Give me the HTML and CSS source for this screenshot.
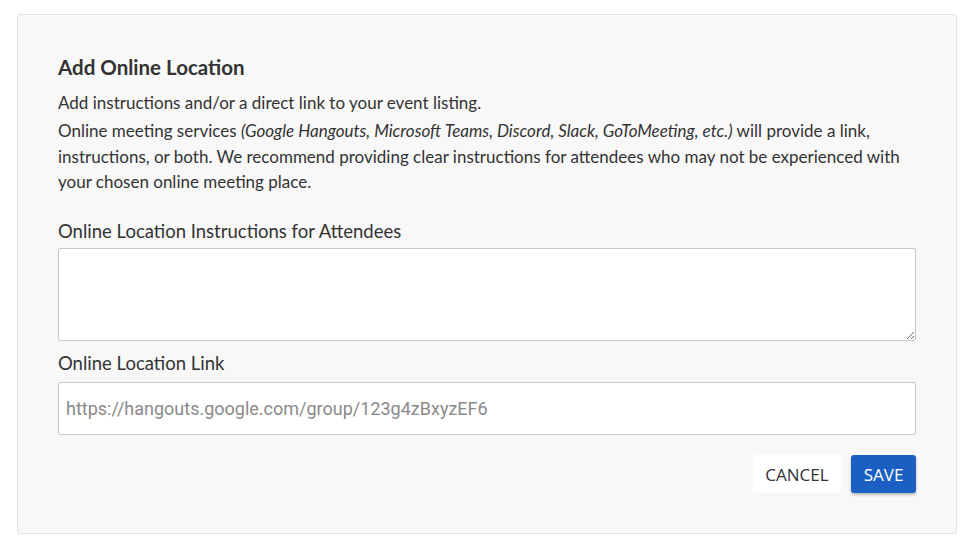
FILE: index.html
```html
<!DOCTYPE html>
<html>
<head>
<meta charset="utf-8">
<link rel="stylesheet" href="styles.css">
</head>
<body>
<div class="page">
  <section class="card">
    <h2 class="title">Add Online Location</h2>
    <p class="text">Add instructions and/or a direct link to your event listing.</p>
    <p class="text">Online meeting services <em>(Google Hangouts, Microsoft Teams, Discord, Slack, GoToMeeting, etc.)</em> will provide a link, instructions, or both. We recommend providing clear instructions for attendees who may not be experienced with your chosen online meeting place.</p>
    <label class="label label-first">Online Location Instructions for Attendees</label>
    <textarea class="area"></textarea>
    <label class="label label-second">Online Location Link</label>
    <input class="field" type="text" placeholder="https://hangouts.google.com/group/123g4zBxyzEF6">
    <div class="actions">
      <button class="btn btn-cancel">CANCEL</button>
      <button class="btn btn-save">SAVE</button>
    </div>
  </section>
</div>
</body>
</html>
```

FILE: styles.css
```css
* { box-sizing: border-box; }
html, body { margin: 0; padding: 0; background: #ffffff; }
body {
  font-family: "Lato", "Noto Sans", sans-serif;
  color: #333333;
}
.page {
  padding: 14px 22px 16px 17px;
}
.card {
  background: #f8f8f8;
  border: 1px solid #e1e1e1;
  border-radius: 3px;
  padding: 38px 40px 40px 39px;
  display: flex;
  flex-direction: column;
}
.title {
  margin: 0 0 9px 1px;
  font-size: 20.5px;
  font-weight: 700;
  line-height: 28px;
  color: #333;
}
.text {
  margin: 0 0 2.5px 1px;
  font-size: 17px;
  line-height: 25.5px;
  color: #333;
}
.text em { font-style: italic; }
.label {
  display: block;
  font-size: 18.5px;
  line-height: 24px;
  color: #333;
  margin: 0 0 5px 1px;
}
.label-first { margin-top: 22px; }
.label-second { margin-bottom: 7px; }
.area {
  display: block;
  width: calc(100% - 1px);
  margin: 0 0 10px 1px;
  height: 93px;
  border: 1px solid #c8c8c8;
  border-radius: 2px;
  background: #fff;
  resize: vertical;
  font-family: inherit;
}
.field {
  display: block;
  width: calc(100% - 1px);
  margin-left: 1px;
  height: 53px;
  border: 1px solid #c8c8c8;
  border-radius: 2px;
  background: #fff;
  padding: 0 7px;
  font-family: "Roboto", sans-serif;
  font-size: 18px;
  color: #333;
}
.field::placeholder { color: #8a8a8a; }
.actions {
  display: flex;
  justify-content: flex-end;
  gap: 10px;
  margin-top: 20px;
}
.btn {
  height: 38px;
  border: 0;
  border-radius: 3px;
  font-family: "Open Sans", sans-serif;
  font-size: 17px;
  padding: 0;
  cursor: pointer;
}
.btn-cancel {
  background: #ffffff;
  color: #333;
  border-radius: 0;
  width: 88px;
}
.btn-save {
  background: #1a5fc1;
  color: #ffffff;
  width: 65px;
  box-shadow: 0 2px 3px rgba(0,0,0,0.25);
}
```
